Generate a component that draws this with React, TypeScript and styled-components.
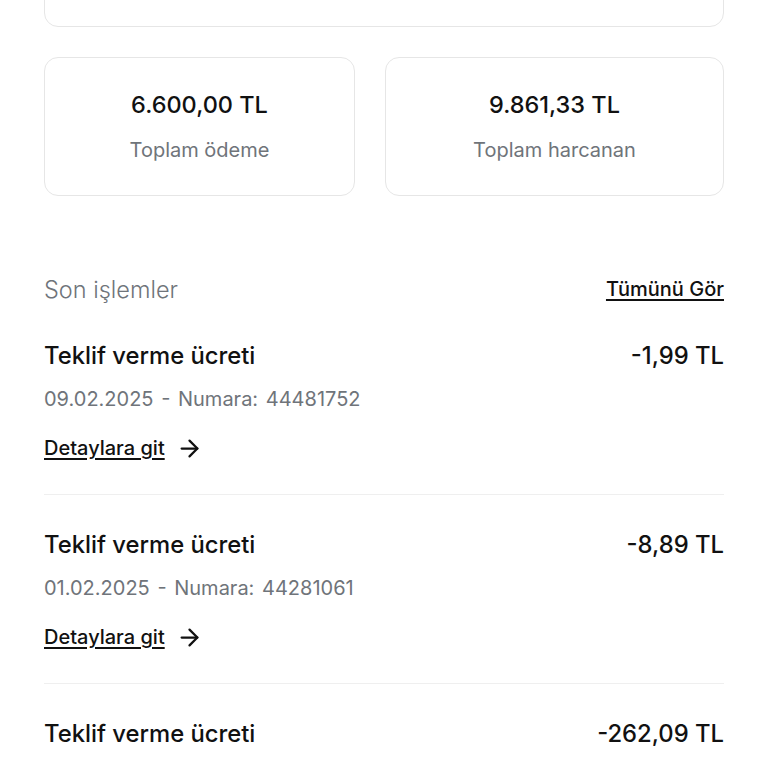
import * as React from "react";
import styled, { createGlobalStyle } from "styled-components";
import { ArrowRight } from "lucide-react";

const GlobalStyle = createGlobalStyle`
  body {
    margin: 0;
    background: #ffffff;
    font-family: Inter, "Liberation Sans", sans-serif;
    color: #151515;
    overflow: hidden;
  }
`;

const Page = styled.div`
  padding: 0 44px;
  display: flex;
  flex-direction: column;
`;

const Card = styled.div`
  box-sizing: border-box;
  border: 1.5px solid #e6e6e6;
  border-radius: 14px;
  background: #fff;
`;

const TopCard = styled(Card)`
  height: 110px;
  margin-top: -83px;
`;

const Stats = styled.div`
  display: grid;
  grid-template-columns: 311px 1fr;
  gap: 30px;
  margin-top: 30px;
`;

const StatCard = styled(Card)`
  height: 139px;
  display: flex;
  flex-direction: column;
  align-items: center;
  padding-top: 33px;
  gap: 19px;
`;

const StatValue = styled.div`
  font-size: 23.5px;
  line-height: 28px;
  font-weight: 500;
  color: #111;
`;

const StatLabel = styled.div`
  font-size: 20px;
  line-height: 24px;
  color: #6f747a;
`;

const SectionHeader = styled.div`
  display: flex;
  justify-content: space-between;
  align-items: center;
  margin-top: 80px;
  height: 26px;
`;

const SectionTitle = styled.div`
  font-size: 23.5px;
  font-weight: 300;
  color: #6f747a;
`;

const LinkText = styled.a`
  font-size: 20px;
  line-height: 24px;
  font-weight: 500;
  color: #111;
  text-decoration: underline;
  text-underline-offset: 3px;
  text-decoration-thickness: 1.5px;
`;

const Row = styled.div<{ $first?: boolean }>`
  display: flex;
  flex-direction: column;
  padding: ${(p) => (p.$first ? "41px" : "37px")} 0 34px;
  border-top: ${(p) => (p.$first ? "none" : "1.5px solid #efefef")};
`;

const RowTop = styled.div`
  display: flex;
  justify-content: space-between;
  font-size: 23.8px;
  line-height: 26px;
  font-weight: 500;
  color: #111;
`;

const RowSub = styled.div`
  margin-top: 18px;
  font-size: 20px;
  line-height: 24px;
  color: #6f747a;
  word-spacing: 2px;
`;

const Detail = styled.div`
  margin-top: 25px;
  height: 24px;
  display: flex;
  align-items: center;
  gap: 11px;
`;

const rows = [
  { date: "09.02.2025", no: "44481752", amount: "-1,99 TL" },
  { date: "01.02.2025", no: "44281061", amount: "-8,89 TL" },
  { date: "27.12.2024", no: "42571255", amount: "-262,09 TL" },
];

export default function App() {
  return (
    <>
      <GlobalStyle />
      <Page>
        <TopCard />
        <Stats>
          <StatCard>
            <StatValue>6.600,00 TL</StatValue>
            <StatLabel>Toplam ödeme</StatLabel>
          </StatCard>
          <StatCard>
            <StatValue>9.861,33 TL</StatValue>
            <StatLabel>Toplam harcanan</StatLabel>
          </StatCard>
        </Stats>
        <SectionHeader>
          <SectionTitle>Son işlemler</SectionTitle>
          <LinkText>Tümünü Gör</LinkText>
        </SectionHeader>
        {rows.map((r, i) => (
          <Row key={r.no} $first={i === 0}>
            <RowTop>
              <span>Teklif verme ücreti</span>
              <span>{r.amount}</span>
            </RowTop>
            <RowSub>
              {r.date} - Numara: {r.no}
            </RowSub>
            <Detail>
              <LinkText>Detaylara git</LinkText>
              <ArrowRight size={27} strokeWidth={2} color="#111" />
            </Detail>
          </Row>
        ))}
      </Page>
    </>
  );
}
